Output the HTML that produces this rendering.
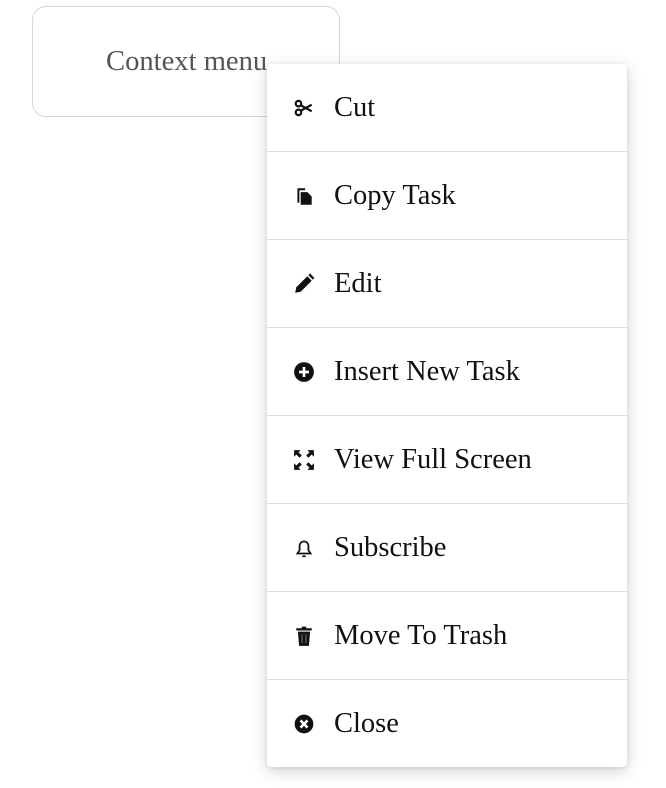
<!DOCTYPE html>
<html><head><style>
body{margin:0;width:666px;height:788px;background:#fff;font-family:"Liberation Serif",serif;position:relative;overflow:hidden}
.btn{position:absolute;left:32px;top:6px;width:306px;height:109px;border:1px solid #d6d6d6;border-radius:14px;box-sizing:content-box}
.btn span{position:absolute;left:73px;top:40px;font-size:28.6px;color:#555;line-height:30px;white-space:nowrap}
.menu{position:absolute;left:267px;top:64px;width:360px;height:703px;background:#fff;border-radius:4px;box-shadow:0 4px 16px rgba(0,0,0,.18),0 1px 4px rgba(0,0,0,.08)}
.row{height:87px;border-bottom:1px solid #ddd;position:relative}
.row:last-child{border-bottom:none}
.row span{position:absolute;left:67px;top:29px;font-size:28.5px;line-height:30px;color:#111;white-space:nowrap}
.row svg{position:absolute;left:26px;top:33px;width:22px;height:22px}
</style></head><body>
<div class="btn"><span>Context menu</span></div>
<div class="menu">
<div class="row"><svg viewBox="0 0 20 20" fill="none" stroke="#111" stroke-width="2"><circle cx="5" cy="6" r="2.5"/><circle cx="5" cy="14" r="2.5"/><path d="M7 7.5L17 13M7 12.5L17 7"/></svg><span>Cut</span></div>
<div class="row"><svg viewBox="0 0 20 20" fill="#111"><path d="M4 3h7v1.8H5.8V16H4z"/><path d="M7 6.5h6l4 4V18H7z"/></svg><span>Copy Task</span></div>
<div class="row"><svg viewBox="0 0 20 20" fill="#111"><path d="M2 18l1-5L13 3l4 4L7 17z"/><path d="M14 2l1.5-1.5 4 4L18 6z"/></svg><span>Edit</span></div>
<div class="row"><svg viewBox="0 0 20 20"><circle cx="10" cy="10" r="9" fill="#111"/><path d="M10 5.5v9M5.5 10h9" stroke="#fff" stroke-width="2.4"/></svg><span>Insert New Task</span></div>
<div class="row"><svg viewBox="0 0 20 20" fill="#111"><path d="M1 1h6L5 3l3 3-2 2-3-3-2 2zM19 1v6l-2-2-3 3-2-2 3-3-2-2zM1 19v-6l2 2 3-3 2 2-3 3 2 2zM19 19h-6l2-2-3-3 2-2 3 3 2-2z"/></svg><span>View Full Screen</span></div>
<div class="row"><svg viewBox="0 0 20 20" fill="none" stroke="#111" stroke-width="1.6"><path d="M4 15h12l-2-3V8a4 4 0 0 0-8 0v4z"/><path d="M8.5 17.5h3"/></svg><span>Subscribe</span></div>
<div class="row"><svg viewBox="0 0 20 20" fill="#111"><path d="M3 3h14v2H3zM8 1.5h4V3H8z"/><path d="M4.5 6h11l-1 13h-9z"/><path d="M8.3 8.5v8M11.7 8.5v8" stroke="#555" stroke-width="1.4"/></svg><span>Move To Trash</span></div>
<div class="row"><svg viewBox="0 0 20 20"><circle cx="10" cy="10" r="8.5" fill="#111"/><path d="M6.8 6.8l6.4 6.4M13.2 6.8l-6.4 6.4" stroke="#fff" stroke-width="2.4"/></svg><span>Close</span></div>
</div>
</body></html>
